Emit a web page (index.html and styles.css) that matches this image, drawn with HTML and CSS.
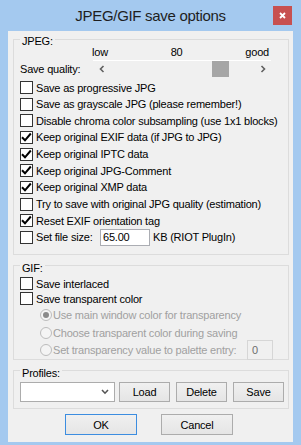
FILE: index.html
```html
<!DOCTYPE html>
<html>
<head>
<meta charset="utf-8">
<link rel="stylesheet" href="styles.css">
</head>
<body>
<div class="window">
  <div class="titlebar">
    <span class="title">JPEG/GIF save options</span>
    <span class="close"><svg width="7" height="7" viewBox="0 0 7 7"><path d="M1 1 L6 6 M6 1 L1 6" stroke="#fff" stroke-width="1.8"/></svg></span>
  </div>
  <div class="client">
    <fieldset class="group jpeg">
      <legend>JPEG:</legend>
      <div class="scale"><span>low</span><span>80</span><span>good</span></div>
      <div class="quality">
        <span>Save quality:</span>
        <div class="scrollbar">
          <span class="arrow"><svg width="6" height="8" viewBox="0 0 6 8"><path d="M4.5 1 L1.5 4 L4.5 7" fill="none" stroke="#606060" stroke-width="1.6"/></svg></span>
          <div class="track"><span class="thumb" style="--v:0.8"></span></div>
          <span class="arrow"><svg width="6" height="8" viewBox="0 0 6 8"><path d="M1.5 1 L4.5 4 L1.5 7" fill="none" stroke="#606060" stroke-width="1.6"/></svg></span>
        </div>
      </div>
      <div class="checks">
        <label class="row"><span class="cb"></span>Save as progressive JPG</label>
        <label class="row"><span class="cb"></span>Save as grayscale JPG (please remember!)</label>
        <label class="row"><span class="cb"></span>Disable chroma color subsampling (use 1x1 blocks)</label>
        <label class="row"><span class="cb"><svg width="11" height="11" viewBox="0 0 11 11"><path d="M1 5.2 L4 8.3 L9.8 1.5" fill="none" stroke="#000" stroke-width="2"/></svg></span>Keep original EXIF data (if JPG to JPG)</label>
        <label class="row"><span class="cb"><svg width="11" height="11" viewBox="0 0 11 11"><path d="M1 5.2 L4 8.3 L9.8 1.5" fill="none" stroke="#000" stroke-width="2"/></svg></span>Keep original IPTC data</label>
        <label class="row"><span class="cb"><svg width="11" height="11" viewBox="0 0 11 11"><path d="M1 5.2 L4 8.3 L9.8 1.5" fill="none" stroke="#000" stroke-width="2"/></svg></span>Keep original JPG-Comment</label>
        <label class="row"><span class="cb"><svg width="11" height="11" viewBox="0 0 11 11"><path d="M1 5.2 L4 8.3 L9.8 1.5" fill="none" stroke="#000" stroke-width="2"/></svg></span>Keep original XMP data</label>
        <label class="row"><span class="cb"></span>Try to save with original JPG quality (estimation)</label>
        <label class="row"><span class="cb"><svg width="11" height="11" viewBox="0 0 11 11"><path d="M1 5.2 L4 8.3 L9.8 1.5" fill="none" stroke="#000" stroke-width="2"/></svg></span>Reset EXIF orientation tag</label>
        <div class="row">
          <span class="cb"></span><span class="fs-label">Set file size:</span>
          <span class="edit">65.00</span><span class="unit">KB (RIOT PlugIn)</span>
        </div>
      </div>
    </fieldset>

    <fieldset class="group gif">
      <legend>GIF:</legend>
      <label class="row small"><span class="cb"></span>Save interlaced</label>
      <label class="row small"><span class="cb"></span>Save transparent color</label>
      <div class="radios">
        <label class="radio-row"><span class="radio on"></span>Use main window color for transparency</label>
        <label class="radio-row"><span class="radio"></span>Choose transparent color during saving</label>
        <div class="radio-row"><span class="radio"></span><span class="pal-label">Set transparency value to palette entry:</span><span class="edit disabled">0</span></div>
      </div>
    </fieldset>

    <fieldset class="group profiles">
      <legend>Profiles:</legend>
      <div class="profile-row">
        <div class="combo"><svg width="8" height="6" viewBox="0 0 8 6"><path d="M1 1 L4 4.2 L7 1" fill="none" stroke="#555" stroke-width="1.6"/></svg></div>
        <button class="btn load">Load</button>
        <button class="btn">Delete</button>
        <button class="btn">Save</button>
      </div>
    </fieldset>

    <div class="dialog-buttons">
      <button class="btn big default">OK</button>
      <button class="btn big">Cancel</button>
    </div>
  </div>
</div>
</body>
</html>
```

FILE: styles.css
```css
* { box-sizing: border-box; }

body {
  margin: 0;
  font-family: "Liberation Sans", Arial, sans-serif;
  font-size: 11px;
  letter-spacing: -0.2px;
  color: #000;
  background: #a4c9ef;
}

.window {
  width: 301px;
  height: 445px;
  background: #a4c9ef;
  display: flex;
  flex-direction: column;
}

.titlebar {
  height: 31px;
  flex: none;
  display: grid;
  grid-template-columns: 1fr auto 1fr;
  align-items: center;
}

.title {
  grid-column: 2;
  font-size: 15px;
  letter-spacing: -0.3px;
  color: #1e1e1e;
  padding-bottom: 1px;
}

.close {
  grid-column: 3;
  justify-self: end;
  margin-right: 9px;
  width: 19px;
  height: 19px;
  background: #c75050;
  display: flex;
  align-items: center;
  justify-content: center;
}

.client {
  flex: 1;
  margin: 0 8px 3px;
  background: #f0f0f0;
  padding: 0 4px 0 5px;
  display: flex;
  flex-direction: column;
}

.group {
  margin: 0;
  min-width: 0;
  border: 1px solid #dcdcdc;
  padding: 0 4px 0 6px;
}

.group legend {
  padding: 4px 2px 0;
  line-height: 12px;
}

.scale {
  margin-top: -1.5px;
  height: 13px;
  line-height: 13px;
  display: flex;
  justify-content: space-between;
  padding: 0 15px 0 72px;
}

.quality {
  margin-top: 1.5px;
  height: 17px;
  display: flex;
  align-items: center;
  justify-content: space-between;
}

.scrollbar {
  width: 178px;
  height: 17px;
  margin-right: 13px;
  border-top: 1px solid #fff;
  display: flex;
}

.arrow {
  width: 17px;
  display: flex;
  align-items: center;
  justify-content: center;
}

.track {
  flex: 1;
}

.thumb {
  display: block;
  width: 17px;
  height: 16px;
  background: #a6a6a6;
  margin-left: calc((100% - 17px) * var(--v));
}

.checks {
  margin-top: 2.2px;
  padding-bottom: 8px;
}

.row {
  height: 16.67px;
  display: flex;
  align-items: center;
  gap: 3px;
  white-space: nowrap;
}

.row.small { height: 15px; }

.cb {
  flex: none;
  width: 13px;
  height: 13px;
  border: 1px solid #333;
  background: #fff;
  display: block;
}

.cb svg { display: block; }

.fs-label { width: 61px; }

.edit {
  width: 50px;
  height: 17px;
  border: 1px solid #abadb3;
  background: #fff;
  padding-left: 2px;
  line-height: 15px;
}

.gif {
  margin-top: 3px;
}

.gif legend + .row { margin-top: 2.5px; }

.radios { padding-left: 20px; }

.radio-row {
  height: 17.5px;
  display: flex;
  align-items: center;
  gap: 1px;
  color: #a0a0a0;
  white-space: nowrap;
}

.radio {
  flex: none;
  width: 12px;
  height: 12px;
  border-radius: 50%;
  border: 1px solid #bcbcbc;
  background: #f4f4f4;
  display: flex;
  align-items: center;
  justify-content: center;
}

.radio.on::after {
  content: "";
  width: 6px;
  height: 6px;
  border-radius: 50%;
  background: #8a8a8a;
}

.pal-label { width: 193px; }

.edit.disabled {
  width: 26px;
  height: 20px;
  line-height: 18px;
  border-color: #d6d6d6;
  background: #f0f0f0;
  color: #6d6d6d;
  padding-left: 4px;
}

.profiles {
  margin-top: 3px;
  padding-bottom: 6px;
}

.profile-row {
  margin-top: 3.5px;
  display: flex;
  gap: 6px;
}

.combo {
  width: 95px;
  height: 20px;
  border: 1px solid #acacac;
  background: #fff;
  display: flex;
  align-items: center;
  justify-content: flex-end;
  padding-right: 5px;
  margin-right: -2px;
}

.btn {
  font: inherit;
  letter-spacing: inherit;
  color: #000;
  width: 51px;
  height: 20px;
  padding: 0;
  border: 1px solid #acacac;
  background: linear-gradient(#f0f0f0, #e5e5e5);
}

.dialog-buttons {
  margin-top: 5px;
  display: flex;
  gap: 24px;
  padding-left: 52px;
}

.btn.big {
  width: 72px;
  height: 21px;
}

.btn.default {
  border-color: #3c8de0;
}
```
